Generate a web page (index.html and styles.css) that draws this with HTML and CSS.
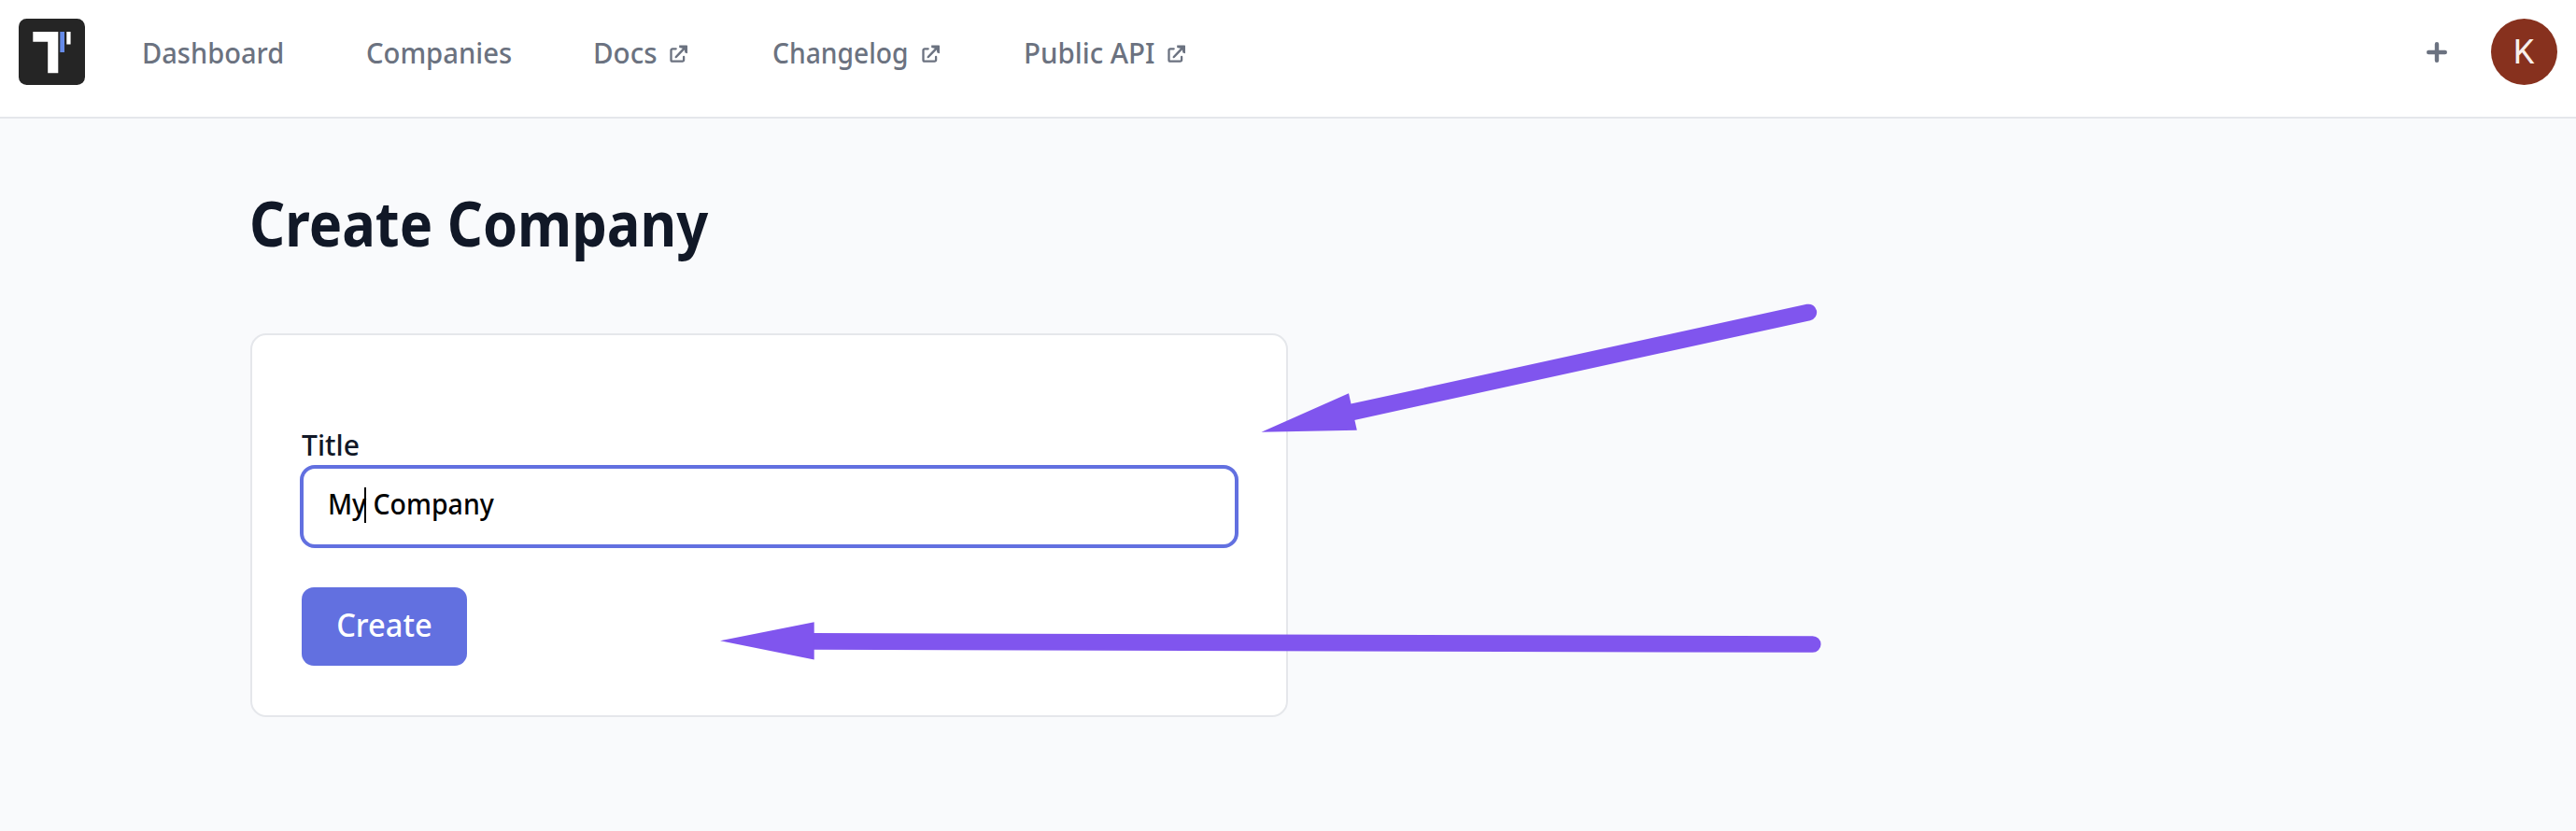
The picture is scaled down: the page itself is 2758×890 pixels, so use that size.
FILE: index.html
```html
<!DOCTYPE html>
<html lang="en">
<head>
<meta charset="utf-8">
<title>Create Company</title>
<link rel="stylesheet" href="styles.css">
</head>
<body>
<svg class="defs" width="0" height="0" aria-hidden="true">
  <symbol id="external" viewBox="0 0 19 19">
    <path d="M6.700 4.300H3A1.500 1.500 0 0 0 1.500 5.800V16.200A1.500 1.500 0 0 0 3 17.700H13.600A1.500 1.500 0 0 0 15.100 16.200V12.800" fill="none" stroke="currentColor" stroke-width="2.300" stroke-linecap="round"/>
    <path d="M6.800 13L15.800 3.600" fill="none" stroke="currentColor" stroke-width="2.500" stroke-linecap="round"/>
    <path d="M10.200 .5H18.300A.7 .7 0 0 1 19 1.200V9.300L16.400 8.600L15.500 4.200L10.200 3Z" fill="currentColor"/>
  </symbol>
</svg>
<header class="topbar">
  <svg class="logo" viewBox="0 0 71 71" aria-label="Logo">
    <rect width="71" height="71" rx="8.500" fill="#252525"/>
    <path d="M15.300 14H42.300V58.300H31.200V24.700H15.300Z" fill="#fff"/>
    <rect x="44.300" y="14" width="4.700" height="22" fill="#668be9"/>
    <rect x="51.300" y="14" width="4.300" height="13.500" fill="#fff"/>
  </svg>
  <nav class="nav">
    <a class="link link-dashboard"><span class="label">Dashboard</span></a>
    <a class="link link-companies"><span class="label">Companies</span></a>
    <a class="link link-docs"><span class="label">Docs</span><svg class="ext"><use href="#external"/></svg></a>
    <a class="link link-changelog"><span class="label">Changelog</span><svg class="ext"><use href="#external"/></svg></a>
    <a class="link link-api"><span class="label">Public API</span><svg class="ext"><use href="#external"/></svg></a>
  </nav>
  <svg class="plus" viewBox="0 0 22 22"><path d="M11 2.200V19.800M2.200 11H19.800" stroke="currentColor" stroke-width="4.400" stroke-linecap="round"/></svg>
  <div class="avatar">K</div>
</header>
<main class="page">
  <h1 class="heading">Create Company</h1>
  <form class="card">
    <label class="field-label">Title</label>
    <div class="input"><span class="value">My Company</span><i class="caret"></i></div>
    <button class="submit" type="button"><span class="submit-text">Create</span></button>
  </form>
</main>
<svg class="arrows" viewBox="0 0 2758 890" aria-hidden="true">
  <path d="M1447 441.500L1936.300 334.500" class="shaft"/>
  <path d="M1350.500 462.700L1444 421.300L1452.800 460.700Z"/>
  <path d="M870 686.900L1940.700 690" class="shaft"/>
  <path d="M771 686.200L871.700 666.300V706.600Z"/>
</svg>
</body>
</html>
```
FILE: styles.css
```css
* { box-sizing: border-box; }
body {
  margin: 0;
  height: 890px;
  overflow: hidden;
  position: relative;
  background: #f9fafc;
  color: #111827;
  font-family: "Noto Sans", sans-serif;
}
.defs { display: block; }
.topbar {
  display: flex;
  align-items: center;
  height: 127px;
  padding: 0 20.500px 14px 20px;
  background: #fff;
  border-bottom: 2px solid #e5e7eb;
  color: #6b7280;
}
.logo { width: 71px; height: 71px; flex: none; }
.nav { display: flex; margin-left: 61.300px; font-size: 31px; font-weight: 500; line-height: 40px; }
.link { display: flex; align-items: center; }
.label { flex: none; white-space: nowrap; transform-origin: 0 50%; }
.link-dashboard { width: 239.900px; }
.link-companies { width: 243px; }
.link-docs { width: 192.100px; }
.link-changelog { width: 269.100px; }
.link-dashboard .label { transform: scaleX(.937); }
.link-companies .label { transform: scaleX(.943); }
.link-docs .label { width: 81.800px; transform: scaleX(.953); }
.link-changelog .label { width: 159.700px; transform: scaleX(.911); }
.link-api .label { width: 153.600px; transform: scaleX(.951); }
.ext { width: 19px; height: 19px; margin-top: 4px; flex: none; }
.plus { width: 22px; height: 22px; margin-left: auto; margin-right: 47px; }
.avatar {
  width: 71px;
  height: 71px;
  border-radius: 50%;
  background: #87311e;
  color: #f7efec;
  font: 400 36px/72px Roboto, sans-serif;
  text-align: center;
}
.page { padding: 71px 0 0 268px; }
.heading {
  margin: 0 0 79px -1px;
  font-size: 66px;
  font-weight: 700;
  line-height: 80px;
  white-space: nowrap;
  transform: scaleX(.902);
  transform-origin: 0 50%;
}
.card {
  width: 1110.500px;
  height: 411px;
  padding: 98.500px 51px 0;
  background: #fff;
  border: 2px solid #e5e7eb;
  border-radius: 17px;
}
.field-label {
  display: block;
  margin-left: 2px;
  font-size: 31px;
  font-weight: 500;
  line-height: 36px;
  transform: scaleX(.97);
  transform-origin: 0 50%;
}
.input {
  position: relative;
  height: 89px;
  margin-top: 4.500px;
  padding-left: 26px;
  border: 4px solid #6270e0;
  border-radius: 16px;
  color: #000;
  font-size: 31px;
  font-weight: 500;
  line-height: 75px;
}
.value { display: inline-block; white-space: nowrap; transform: scaleX(.918); transform-origin: 0 50%; }
.caret { position: absolute; left: 64.500px; top: 20px; width: 2px; height: 38px; background: #000; }
.submit {
  display: block;
  width: 177px;
  height: 84px;
  margin: 41.500px 0 0 2px;
  padding: 0 0 4px;
  border: 0;
  border-radius: 13px;
  background: #6270e0;
  color: #fff;
  font: 500 34px/80px "Noto Sans", sans-serif;
}
.submit-text { display: inline-block; transform: scaleX(.96); }
.arrows { position: absolute; left: 0; top: 0; width: 2758px; height: 890px; fill: #8055ee; }
.shaft { stroke: #8055ee; stroke-width: 17.700px; stroke-linecap: round; }
```
